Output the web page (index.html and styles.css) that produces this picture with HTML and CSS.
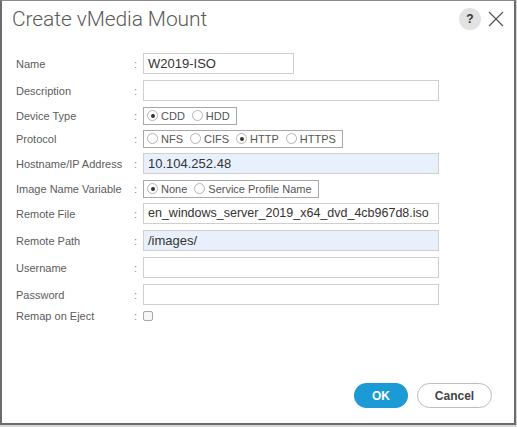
FILE: index.html
```html
<!DOCTYPE html>
<html>
<head>
<meta charset="utf-8">
<title>Create vMedia Mount</title>
<link rel="stylesheet" href="styles.css">
</head>
<body>
<div class="dialog">
  <div class="head">
    <h1 class="title">Create vMedia Mount</h1>
    <div class="tools">
      <span class="help">?</span>
      <svg class="close" width="16" height="16" viewBox="0 0 16 16"><path d="M1 1 L15 15 M15 1 L1 15" stroke="#555" stroke-width="1.3" fill="none"/></svg>
    </div>
  </div>

  <div class="form">
    <div class="row">
      <span class="lbl">Name</span><span class="colon">:</span>
      <div class="field short">W2019-ISO</div>
    </div>
    <div class="row">
      <span class="lbl">Description</span><span class="colon">:</span>
      <div class="field"></div>
    </div>
    <div class="row rrow">
      <span class="lbl">Device Type</span><span class="colon">:</span>
      <div class="radios">
        <span class="opt"><i class="radio on"></i>CDD</span>
        <span class="opt"><i class="radio"></i>HDD</span>
      </div>
    </div>
    <div class="row rrow">
      <span class="lbl">Protocol</span><span class="colon">:</span>
      <div class="radios">
        <span class="opt"><i class="radio"></i>NFS</span>
        <span class="opt"><i class="radio"></i>CIFS</span>
        <span class="opt"><i class="radio on"></i>HTTP</span>
        <span class="opt"><i class="radio"></i>HTTPS</span>
      </div>
    </div>
    <div class="row">
      <span class="lbl">Hostname/IP Address</span><span class="colon">:</span>
      <div class="field blue">10.104.252.48</div>
    </div>
    <div class="row rrow">
      <span class="lbl">Image Name Variable</span><span class="colon">:</span>
      <div class="radios">
        <span class="opt"><i class="radio on"></i>None</span>
        <span class="opt"><i class="radio"></i>Service Profile Name</span>
      </div>
    </div>
    <div class="row">
      <span class="lbl">Remote File</span><span class="colon">:</span>
      <div class="field tight">en_windows_server_2019_x64_dvd_4cb967d8.iso</div>
    </div>
    <div class="row">
      <span class="lbl">Remote Path</span><span class="colon">:</span>
      <div class="field blue">/images/</div>
    </div>
    <div class="row">
      <span class="lbl">Username</span><span class="colon">:</span>
      <div class="field"></div>
    </div>
    <div class="row">
      <span class="lbl">Password</span><span class="colon">:</span>
      <div class="field"></div>
    </div>
    <div class="row crow">
      <span class="lbl">Remap on Eject</span><span class="colon">:</span>
      <i class="check"></i>
    </div>
  </div>

  <div class="foot">
    <button class="btn ok">OK</button>
    <button class="btn cancel">Cancel</button>
  </div>
</div>
</body>
</html>
```

FILE: styles.css
```css
*{padding:0;margin:0;box-sizing:border-box;}
body{background:#d6d6d6;font-family:"Liberation Sans",Arial,sans-serif;}

.dialog{width:516px;height:425px;background:#fff;border:2px solid #6c6c6c;border-top:1px solid #8a8a8a;display:flex;flex-direction:column;padding:0 22px 15px 14px;}

.head{display:flex;align-items:center;justify-content:space-between;height:36px;margin-left:-4px;margin-right:-12px;}
.title{font-family:Roboto,"Liberation Sans",sans-serif;font-weight:300;font-size:21px;color:#5a5a5a;letter-spacing:-0.1px;}
.tools{display:flex;align-items:center;gap:7px;}
.help{width:22px;height:22px;border-radius:50%;background:#e2e2e2;color:#333;font-weight:bold;font-size:12px;display:flex;align-items:center;justify-content:center;}
.close{display:block;}

.form{display:flex;flex-direction:column;gap:6px;margin-top:16px;}
.row{display:flex;align-items:center;height:21px;}
.rrow{height:17px;}
.crow{height:10px;}
.lbl{width:118px;font-size:11px;color:#5c5c5c;}
.colon{width:9px;font-size:11px;color:#888;}

.field{width:296px;height:21px;border:1px solid #cfcfcf;font-size:13px;color:#333;padding:0 4px;line-height:19px;white-space:nowrap;overflow:hidden;}
.field.short{width:151px;}
.field.blue{background:#e8f0fb;}
.field.tight{font-size:12.5px;}

.radios{display:flex;align-items:center;height:18px;border:1px solid #a8a8a8;padding:0 6px 0 3px;gap:7px;font-size:11px;color:#555;}
.opt{display:flex;align-items:center;gap:3px;}
.radio{display:inline-block;width:11px;height:11px;border:1px solid #b4b4b4;border-radius:50%;position:relative;}
.radio.on::after{content:"";position:absolute;left:2.5px;top:2.5px;width:4px;height:4px;border-radius:50%;background:#333;}

.check{display:inline-block;width:10px;height:10px;border:1px solid #a8a8a8;border-radius:2px;background:#f6f6f6;}

.foot{margin-top:auto;display:flex;justify-content:flex-end;gap:9px;}
.btn{height:25px;border-radius:13px;font-family:"Liberation Sans",Arial,sans-serif;font-weight:bold;font-size:12px;}
.ok{width:54px;background:#1b9ad6;color:#fff;border:none;}
.cancel{width:75px;background:#fff;color:#444;border:1px solid #bdbdbd;}
```
